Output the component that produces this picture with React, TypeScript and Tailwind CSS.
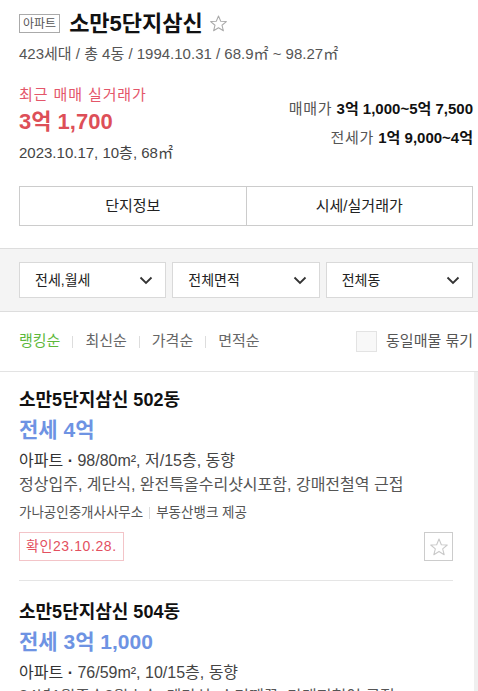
import React from "react";

const font = { fontFamily: '"Liberation Sans", "Noto Sans CJK KR", sans-serif' };

const Star = ({ size = 18, color = "#b5b5b5" }: { size?: number; color?: string }) => (
  <svg width={size} height={size} viewBox="0 0 24 24" fill="none">
    <polygon
      points="12,2.5 14.8,9.2 21.9,9.6 16.4,14.2 18.2,21.2 12,17.3 5.8,21.2 7.6,14.2 2.1,9.6 9.2,9.2"
      stroke={color}
      strokeWidth="1.3"
      strokeLinejoin="round"
    />
  </svg>
);

const Chevron = () => (
  <svg width="14" height="9" viewBox="0 0 14 9" fill="none">
    <polyline points="1.5,1.5 7,7 12.5,1.5" stroke="#333" strokeWidth="1.8" />
  </svg>
);

const Select = ({ label }: { label: string }) => (
  <div className="flex h-[36px] flex-1 items-center justify-between border border-[#d9d9d9] bg-white pl-[15px] pr-[12px] text-[14px] text-[#222]">
    <span>{label}</span>
    <Chevron />
  </div>
);

const Listing = ({
  title,
  price,
  info,
  desc,
  last,
}: {
  title: string;
  price: string;
  info: string;
  desc: string;
  last?: boolean;
}) => (
  <div className={`pt-[16px] ${last ? "" : "border-b border-[#e5e5e5] pb-[19px]"}`}>
    <div className="text-[18px] font-bold leading-[24px] text-[#111]">{title}</div>
    <div className="mt-[5px] text-[21px] font-bold leading-[26px] text-[#6e93e3]">{price}</div>
    <div className="mt-[6px] text-[16px] leading-[24px] text-[#444]">
      <span className="text-[#333]">아파트</span> <b className="text-[#333]">·</b> {info}
    </div>
    <div className="text-[16px] leading-[23px] text-[#555]">{desc}</div>
    {!last && (
      <>
        <div className="mt-[7px] flex items-center text-[13.5px] leading-[20px] text-[#555]">
          <span>가나공인중개사사무소</span>
          <span className="mx-[6px] h-[12px] w-px bg-[#ddd]" />
          <span>부동산뱅크 제공</span>
        </div>
        <div className="mt-[9px] flex items-center justify-between">
          <div className="flex h-[29px] items-center border border-[#f3c4c8] px-[6px] text-[14px] tracking-[0.6px] text-[#e3505f]">
            확인23.10.28.
          </div>
          <div className="flex h-[29px] w-[29px] items-center justify-center border border-[#ccc]">
            <Star size={20} color="#c9c9c9" />
          </div>
        </div>
      </>
    )}
  </div>
);

export default function App() {
  return (
    <div className="h-[691px] w-[478px] overflow-hidden bg-white" style={font}>
      <div className="pl-[19px] pr-[5px] pt-[10px]">
        <div className="flex h-[27px] items-center">
          <span className="mr-[9px] flex h-[19px] items-center border border-[#aaa] px-[3px] text-[12px] leading-none text-[#555]">
            아파트
          </span>
          <span className="text-[22px] font-bold leading-none text-[#111]">소만5단지삼신</span>
          <span className="ml-[6px]">
            <Star size={19} color="#aaa" />
          </span>
        </div>
        <div className="mt-[6px] text-[15px] leading-[22px] text-[#555]">
          423세대 / 총 4동 / 1994.10.31 / 68.9㎡ ~ 98.27㎡
        </div>
        <div className="mt-[19px] flex justify-between">
          <div>
            <div className="text-[15px] leading-[22px] tracking-[0.06em] text-[#e4566a]">최근 매매 실거래가</div>
            <div className="mt-[2px] text-[22px] font-bold leading-[28px] text-[#dd4f58]">3억 1,700</div>
            <div className="mt-[6px] text-[15px] leading-[22px] text-[#444]">2023.10.17, 10층, 68㎡</div>
          </div>
          <div className="pt-[14px] text-right text-[15px] leading-[22px] text-[#555]">
            <div>
              <span className="tracking-[0.05em]">매매가</span> <b className="text-[#111]">3억 1,000~5억 7,500</b>
            </div>
            <div className="mt-[7px]">
              <span className="tracking-[0.05em]">전세가</span> <b className="text-[#111]">1억 9,000~4억</b>
            </div>
          </div>
        </div>
        <div className="mt-[22px] flex h-[40px] border border-[#ccc] text-[15px] text-[#222]">
          <div className="flex flex-1 items-center justify-center border-r border-[#ccc]">단지정보</div>
          <div className="flex flex-1 items-center justify-center">시세/실거래가</div>
        </div>
      </div>

      <div className="mt-[22px] flex gap-[6px] border-y border-[#ddd] bg-[#f4f4f4] pb-[13px] pl-[19px] pr-[5px] pt-[13px]">
        <Select label="전세,월세" />
        <Select label="전체면적" />
        <Select label="전체동" />
      </div>

      <div className="flex h-[60px] items-center justify-between border-b border-[#e3e3e3] pl-[19px] pr-[5px] text-[15px]">
        <div className="flex items-center text-[#666]">
          <span className="text-[#5cb83a]">랭킹순</span>
          <span className="mx-[12px] h-[12px] w-px bg-[#ddd]" />
          <span>최신순</span>
          <span className="mx-[12px] h-[12px] w-px bg-[#ddd]" />
          <span>가격순</span>
          <span className="mx-[12px] h-[12px] w-px bg-[#ddd]" />
          <span>면적순</span>
        </div>
        <div className="flex items-center text-[#555]">
          <span className="mr-[9px] h-[21px] w-[21px] border border-[#e3e3e3] bg-[#f8f8f8]" />
          <span>동일매물 묶기</span>
        </div>
      </div>

      <div className="border-r-[4px] border-[#efefef] pl-[19px] pr-[21px]">
        <Listing
          title="소만5단지삼신 502동"
          price="전세 4억"
          info="98/80m², 저/15층, 동향"
          desc="정상입주, 계단식, 완전특올수리샷시포함, 강매전철역 근접"
        />
        <div className="pt-[3px]">
          <Listing
            title="소만5단지삼신 504동"
            price="전세 3억 1,000"
            info="76/59m², 10/15층, 동향"
            desc="24년1월중순2월초순, 계단식, 수리깨끗, 강매전철역 근접"
            last
          />
        </div>
      </div>
    </div>
  );
}
